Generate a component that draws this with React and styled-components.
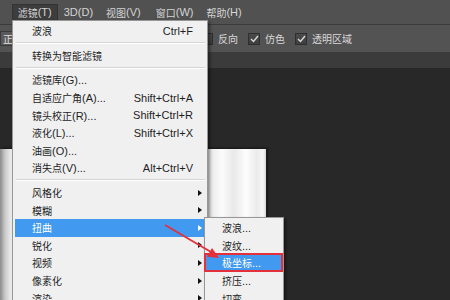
import React from "react";
import styled, { createGlobalStyle } from "styled-components";

const GlobalStyle = createGlobalStyle`
  html, body { margin: 0; padding: 0; background: #282828; overflow: hidden; }
  body { font-family: "Liberation Sans", "Noto Sans CJK SC", sans-serif; font-size: 11px; }
`;

const Screen = styled.div`
  position: relative;
  width: 450px;
  height: 300px;
  overflow: hidden;
  display: flex;
  flex-direction: column;
  background: #282828;
`;

const MenuBar = styled.div`
  height: 24px;
  flex: none;
  background: #515151;
  display: flex;
  align-items: center;
  margin-left: -43px;
  color: #d4d4d4;
`;

const BarItem = styled.div`
  height: 17px;
  display: flex;
  align-items: center;
  padding: 0 6px;
  margin-right: ${(p) => p.$gap || 0}px;
  background: ${(p) => (p.$active ? "#3d3d3d" : "transparent")};
  box-shadow: ${(p) => (p.$active ? "inset 0 0 0 1px #333" : "none")};
  white-space: nowrap;
`;

const Han = styled.span`
  font-family: "Noto Sans CJK SC", sans-serif;
  font-size: 10px;
`;

const Toolbar = styled.div`
  height: 27px;
  flex: none;
  background: #535353;
  border-top: 1px solid #3b3b3b;
  display: flex;
  align-items: center;
  color: #d8d8d8;
`;

const ModeBox = styled.div`
  width: 60px;
  height: 15px;
  background: #5a5a5a;
  border: 1px solid #3a3a3a;
  display: flex;
  align-items: center;
  padding-left: 2px;
  box-sizing: border-box;
  color: #e0e0e0;
`;

const Checks = styled.div`
  margin-left: 141px;
  display: flex;
  align-items: center;
  gap: 10px;
`;

const CheckGroup = styled.label`
  display: flex;
  align-items: center;
  gap: 5px;
`;

const Box = styled.span`
  width: 12px;
  height: 12px;
  box-sizing: border-box;
  border: 1px solid #2f2f2f;
  background: linear-gradient(#4a4a4a, #3e3e3e);
  display: flex;
  align-items: center;
  justify-content: center;
`;

const TabStrip = styled.div`
  height: 16px;
  flex: none;
  background: #3b3b3b;
`;

const Workspace = styled.div`
  flex: 1;
  padding-top: 81px;
  background: #282828;
  display: flex;
`;

const Document = styled.div`
  width: 266px;
  height: 200px;
  box-shadow: 1px 0 0 #1c1c1c, 2px -1px 2px rgba(0,0,0,0.5);
  background: linear-gradient(
    90deg,
    #8a8a8a 0px,
    #c8c8c8 5px,
    #f2f2f2 12px,
    #ffffff 40px,
    #ffffff 200px,
    #ececec 212px,
    #fbfbfb 222px,
    #e9e9e9 234px,
    #fdfdfd 246px,
    #ebebeb 257px,
    #f6f6f6 263px,
    #d8d8d8 266px
  );
`;

const Dropdown = styled.div`
  position: absolute;
  left: 12px;
  top: 20px;
  width: 196px;
  box-sizing: border-box;
  border: 1px solid #979797;
  background: #f0f0f0;
  padding: 1px 2px;
  box-shadow: 2px 2px 3px rgba(0, 0, 0, 0.45);
  color: #1e1e1e;
`;

const Submenu = styled.div`
  position: absolute;
  left: 204px;
  top: 217px;
  width: 80px;
  box-sizing: border-box;
  border: 1px solid #979797;
  background: #f0f0f0;
  padding: 1px;
  box-shadow: 2px 2px 3px rgba(0, 0, 0, 0.45);
  color: #1e1e1e;
`;

const Row = styled.div`
  height: 17.6px;
  display: grid;
  grid-template-columns: 1fr auto 12px;
  align-items: center;
  padding-left: ${(p) => p.$indent}px;
  white-space: nowrap;
  background: ${(p) => (p.$active ? "#419af0" : "transparent")};
  color: ${(p) => (p.$active ? "#ffffff" : "inherit")};
`;

const Shortcut = styled.span`
  text-align: right;
`;

const Arrow = styled.span`
  margin-left: 5px;
  width: 0;
  height: 0;
  border-top: 3.5px solid transparent;
  border-bottom: 3.5px solid transparent;
  border-left: 4px solid ${(p) => (p.$light ? "#ffffff" : "#111")};
`;

const Separator = styled.div`
  height: 7px;
  display: flex;
  flex-direction: column;
  justify-content: center;
  margin-left: 1px;
  &::after {
    content: "";
    display: block;
    border-top: 1px solid #d5d5d5;
    border-bottom: 1px solid #ffffff;
  }
`;

const Callout = styled.div`
  position: absolute;
  left: 204px;
  top: 253px;
  width: 79px;
  height: 19px;
  box-sizing: border-box;
  border: 2px solid #e3303a;
`;

const Pointer = styled.svg`
  position: absolute;
  left: 0;
  top: 0;
  pointer-events: none;
`;

function T({ children }) {
  const parts = String(children).split(/([\u3000-\u9fff]+)/);
  return (
    <>
      {parts.map((p, i) =>
        /[\u3000-\u9fff]/.test(p) ? <Han key={i}>{p}</Han> : p ? <span key={i}>{p}</span> : null
      )}
    </>
  );
}

const mainMenu = [
  { label: "波浪", sc: "Ctrl+F" },
  { sep: true },
  { label: "转换为智能滤镜" },
  { sep: true },
  { label: "滤镜库(G)..." },
  { label: "自适应广角(A)...", sc: "Shift+Ctrl+A" },
  { label: "镜头校正(R)...", sc: "Shift+Ctrl+R" },
  { label: "液化(L)...", sc: "Shift+Ctrl+X" },
  { label: "油画(O)..." },
  { label: "消失点(V)...", sc: "Alt+Ctrl+V" },
  { sep: true },
  { label: "风格化", sub: true },
  { label: "模糊", sub: true },
  { label: "扭曲", sub: true, active: true },
  { label: "锐化", sub: true },
  { label: "视频", sub: true },
  { label: "像素化", sub: true },
  { label: "渲染", sub: true },
];

const subMenu = [
  { label: "波浪..." },
  { label: "波纹..." },
  { label: "极坐标...", active: true },
  { label: "挤压..." },
  { label: "切变" },
];

function CheckMark() {
  return (
    <svg width="9" height="8" viewBox="0 0 9 8">
      <path d="M1 4 L3.5 6.5 L8 1" fill="none" stroke="#d6d6d6" strokeWidth="1.5" />
    </svg>
  );
}

export default function App() {
  return (
    <>
      <GlobalStyle />
      <Screen>
        <MenuBar>
          <BarItem $gap={8}><T>选择(S)</T></BarItem>
          <BarItem $active $gap={0}><T>滤镜(T)</T></BarItem>
          <BarItem $gap={1}><T>3D(D)</T></BarItem>
          <BarItem $gap={3}><T>视图(V)</T></BarItem>
          <BarItem $gap={1}><T>窗口(W)</T></BarItem>
          <BarItem><T>帮助(H)</T></BarItem>
        </MenuBar>
        <Toolbar>
          <ModeBox><Han>正常</Han></ModeBox>
          <Checks>
            <CheckGroup><Box /><T>反向</T></CheckGroup>
            <CheckGroup><Box><CheckMark /></Box><T>仿色</T></CheckGroup>
            <CheckGroup><Box><CheckMark /></Box><T>透明区域</T></CheckGroup>
          </Checks>
        </Toolbar>
        <TabStrip />
        <Workspace>
          <Document />
        </Workspace>

        <Dropdown>
          {mainMenu.map((m, i) =>
            m.sep ? (
              <Separator key={i} />
            ) : (
              <Row key={i} $indent={17} $active={m.active}>
                <span><T>{m.label}</T></span>
                <Shortcut>{m.sc || ""}</Shortcut>
                {m.sub ? <Arrow $light={m.active} /> : <span />}
              </Row>
            )
          )}
        </Dropdown>

        <Submenu>
          {subMenu.map((m, i) => (
            <Row key={i} $indent={16} $active={m.active}>
              <span><T>{m.label}</T></span>
              <span />
              <span />
            </Row>
          ))}
        </Submenu>

        <Callout />
        <Pointer width="450" height="300" viewBox="0 0 450 300">
          <line x1="165" y1="225" x2="211" y2="252" stroke="#e3303a" strokeWidth="1.8" />
          <polygon points="219,258 207,256.7 212,248.1" fill="#e3303a" />
        </Pointer>
      </Screen>
    </>
  );
}
